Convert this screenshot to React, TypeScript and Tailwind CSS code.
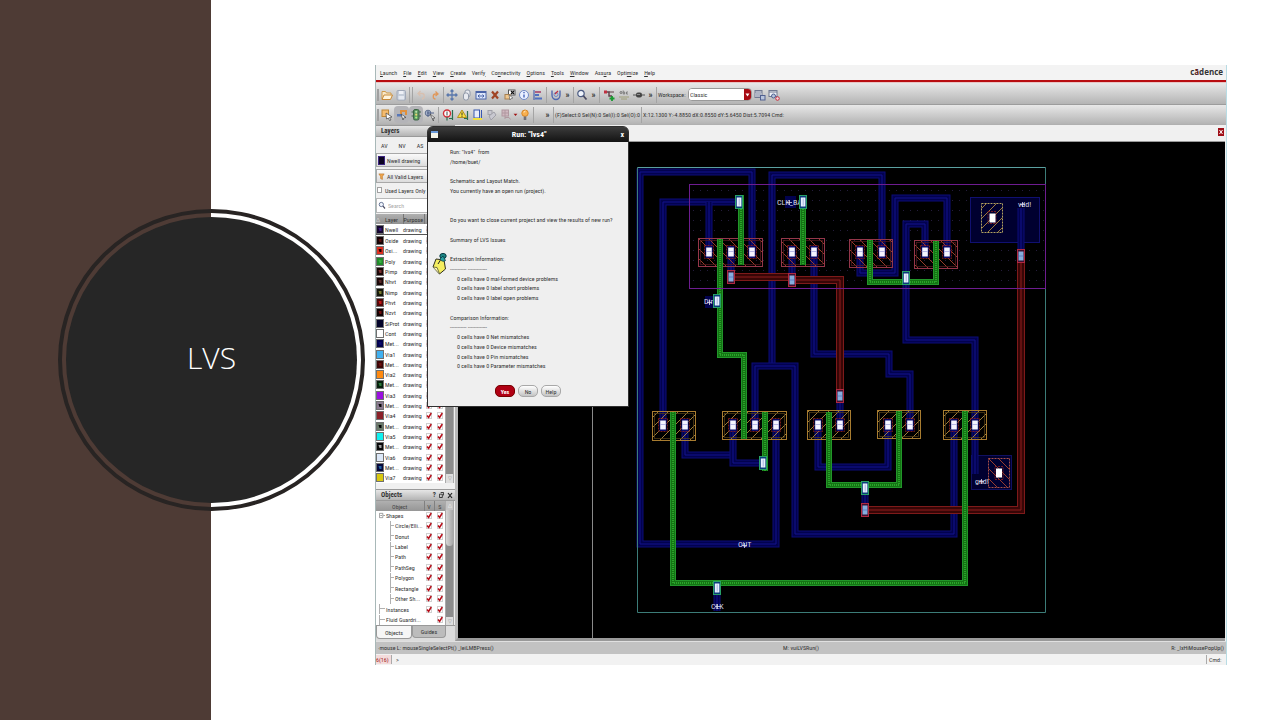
import type { ReactNode } from "react";

type Point = [number, number];

const menus: [string, string, string][] = [
  ["", "L", "aunch"],
  ["", "F", "ile"],
  ["", "E", "dit"],
  ["", "V", "iew"],
  ["", "C", "reate"],
  ["Verif", "y", ""],
  ["Co", "n", "nectivity"],
  ["", "O", "ptions"],
  ["", "T", "ools"],
  ["", "W", "indow"],
  ["Ass", "u", "ra"],
  ["Opti", "m", "ize"],
  ["", "H", "elp"],
];

const layers: { name: string; fill: string; mark: string }[] = [
  { name: "Nwell", fill: "#14082e", mark: "#3a1a80" },
  { name: "Oxide", fill: "#140404", mark: "#5a1010" },
  { name: "Oxi...", fill: "#e03020", mark: "#200404" },
  { name: "Poly", fill: "#1f8a2a", mark: "#38b040" },
  { name: "Pimp", fill: "#1a0606", mark: "#7a3030" },
  { name: "Nhvt", fill: "#1a0808", mark: "#5a2a2a" },
  { name: "Nimp", fill: "#14180a", mark: "#7a7a30" },
  { name: "Phvt", fill: "#500808", mark: "#c01818" },
  { name: "Nzvt", fill: "#120202", mark: "#701010" },
  { name: "SiProt", fill: "#04042a", mark: "#04042a" },
  { name: "Cont", fill: "#ffffff", mark: "#ffffff" },
  { name: "Met...", fill: "#02024c", mark: "#0a0a70" },
  { name: "Via1", fill: "#40b0f0", mark: "#40b0f0" },
  { name: "Met...", fill: "#3c0606", mark: "#6a1010" },
  { name: "Via2", fill: "#ff8a10", mark: "#ff8a10" },
  { name: "Met...", fill: "#06200c", mark: "#2a7a3a" },
  { name: "Via3", fill: "#9a10e0", mark: "#9a10e0" },
  { name: "Met...", fill: "#8a7a90", mark: "#080808" },
  { name: "Via4", fill: "#8a2028", mark: "#8a2028" },
  { name: "Met...", fill: "#6a7a6a", mark: "#040404" },
  { name: "Via5", fill: "#10f0f0", mark: "#10f0f0" },
  { name: "Met...", fill: "#080808", mark: "#a0a0a0" },
  { name: "Via6", fill: "#dce8f8", mark: "#dce8f8" },
  { name: "Met...", fill: "#04083c", mark: "#2060a0" },
  { name: "Via7", fill: "#d8c810", mark: "#d8c810" },
];

const objects: { name: string; level: number; v: boolean }[] = [
  { name: "Shapes", level: 0, v: true },
  { name: "Circle/Elli...", level: 1, v: true },
  { name: "Donut", level: 1, v: true },
  { name: "Label", level: 1, v: true },
  { name: "Path", level: 1, v: true },
  { name: "PathSeg", level: 1, v: true },
  { name: "Polygon", level: 1, v: true },
  { name: "Rectangle", level: 1, v: true },
  { name: "Other Sh...", level: 1, v: true },
  { name: "Instances", level: 0, v: true },
  { name: "Fluid Guardri...", level: 0, v: false },
];

const report: { text: string; indent?: boolean }[] = [
  { text: 'Run: "lvs4"  from' },
  { text: "/home/buet/" },
  { text: "" },
  { text: "Schematic and Layout Match." },
  { text: "You currently have an open run (project)." },
  { text: "" },
  { text: "" },
  { text: "Do you want to close current project and view the results of new run?" },
  { text: "" },
  { text: "Summary of LVS Issues" },
  { text: "" },
  { text: "Extraction Information:" },
  { text: "----------- -------------" },
  { text: "0 cells have 0 mal-formed device problems", indent: true },
  { text: "0 cells have 0 label short problems", indent: true },
  { text: "0 cells have 0 label open problems", indent: true },
  { text: "" },
  { text: "Comparison Information:" },
  { text: "----------- -------------" },
  { text: "0 cells have 0 Net mismatches", indent: true },
  { text: "0 cells have 0 Device mismatches", indent: true },
  { text: "0 cells have 0 Pin mismatches", indent: true },
  { text: "0 cells have 0 Parameter mismatches", indent: true },
];

const blueWires: Point[][] = [
  [[752, 256], [752, 172], [640, 172], [640, 544], [776, 544], [776, 425]],
  [[739, 202], [663, 202], [663, 425]],
  [[709, 202], [709, 252]],
  [[772, 366], [772, 175], [882, 175], [882, 252]],
  [[755, 425], [755, 366], [795, 366], [795, 534], [954, 534], [954, 425]],
  [[814, 252], [814, 354], [889, 354], [889, 374], [910, 374], [910, 425]],
  [[731, 252], [731, 278]],
  [[792, 252], [792, 280]],
  [[860, 252], [860, 273], [895, 273], [895, 198], [947, 198], [947, 252]],
  [[925, 252], [925, 224], [906, 224], [906, 340], [975, 340], [975, 474]],
  [[685, 425], [685, 455], [733, 455]],
  [[733, 425], [733, 463], [760, 463]],
  [[818, 425], [818, 467], [888, 467], [888, 425]],
  [[840, 396], [840, 425]],
  [[865, 488], [865, 510]],
  [[717, 584], [717, 611]],
  [[1021, 208], [1021, 256]],
];

const greenWires: Point[][] = [
  [[741, 195], [741, 265]],
  [[720, 239], [720, 355], [744, 355], [744, 439]],
  [[803, 195], [803, 265]],
  [[870, 240], [870, 282], [936, 282], [936, 241]],
  [[673, 412], [673, 583], [965, 583], [965, 411]],
  [[765, 412], [765, 471]],
  [[829, 412], [829, 485], [899, 485], [899, 411]],
];

const redWires: Point[][] = [
  [[731, 277], [793, 277]],
  [[792, 280], [840, 280], [840, 396]],
  [[1021, 256], [1021, 510], [865, 510]],
];

const pDevices: { box: [number, number, number, number]; contacts: number[] }[] = [
  { box: [698, 238, 64, 28], contacts: [709, 731, 752] },
  { box: [781, 238, 43, 28], contacts: [792, 814] },
  { box: [849, 239, 43, 28], contacts: [860, 882] },
  { box: [914, 240, 43, 28], contacts: [925, 947] },
];

const nDevices: { box: [number, number, number, number]; contacts: number[] }[] = [
  { box: [652, 411, 43, 29], contacts: [663, 685] },
  { box: [722, 411, 64, 28], contacts: [733, 755, 776] },
  { box: [807, 410, 43, 29], contacts: [818, 840] },
  { box: [877, 410, 43, 28], contacts: [888, 910] },
  { box: [943, 410, 43, 29], contacts: [954, 975] },
];

const polyVias: Point[] = [[739, 202], [803, 202], [717, 301], [906, 278], [763, 463], [865, 488], [717, 588]];
const metalVias: Point[] = [[731, 277], [792, 280], [1021, 256], [840, 396], [865, 510]];

const labels: { x: number; y: number; text: string; mark: Point }[] = [
  { x: 777, y: 205, text: "CLK_BA", mark: [789, 202] },
  { x: 704, y: 304, text: "Din", mark: [709, 302] },
  { x: 738, y: 547, text: "OUT", mark: [744, 545] },
  { x: 711, y: 609, text: "CLK", mark: [717, 606] },
  { x: 1018, y: 207, text: "vdd!", mark: [1022, 204] },
  { x: 975, y: 484, text: "gnd!", mark: [981, 481] },
];

const toPoints = (points: Point[]) => points.map((p) => p.join(",")).join(" ");

function Wire({ points, width, edge, body, core }: { points: Point[]; width: number; edge: string; body: string; core: string }) {
  const pts = toPoints(points);
  return (
    <g fill="none" strokeLinecap="butt" strokeLinejoin="miter">
      <polyline points={pts} stroke={edge} strokeWidth={width} />
      <polyline points={pts} stroke={body} strokeWidth={width - 2} />
      <polyline points={pts} stroke={core} strokeWidth={1} />
    </g>
  );
}

function Contact({ x, y }: { x: number; y: number }) {
  return (
    <g>
      <rect x={x - 4.5} y={y - 6.5} width="9" height="13" fill="none" stroke="#902020" strokeWidth="0.8" strokeDasharray="2 1" />
      <rect x={x - 3.5} y={y - 6} width="7" height="12" fill="#08086a" />
      <rect x={x - 2.8} y={y - 4.5} width="5.6" height="9" fill="#f4f4ff" />
      <rect x={x - 2.8} y={y - 0.8} width="5.6" height="0.8" fill="#a8a8e0" />
    </g>
  );
}

function Circuit() {
  return (
    <svg viewBox="458 142 767 496" className="block h-full w-full" role="img" aria-label="Circuit layout">
      <defs>
        <pattern id="hatchP" width="10" height="10" patternUnits="userSpaceOnUse">
          <path d="M0 0L10 10" stroke="#a8442c" strokeWidth="0.9" />
        </pattern>
        <pattern id="hatchN" width="10" height="10" patternUnits="userSpaceOnUse">
          <path d="M0 10L10 0" stroke="#b08a3c" strokeWidth="0.9" />
        </pattern>
        <pattern id="dots" width="7" height="10" patternUnits="userSpaceOnUse">
          <rect width="1" height="1" fill="#241c3c" />
        </pattern>
      </defs>
      <rect x="458" y="142" width="767" height="496" fill="#000" />
      <path d="M592.5 142V638" stroke="#8a8a8a" />
      <rect x="690" y="185" width="355" height="103" fill="url(#dots)" />
      <rect x="970.5" y="197.5" width="69" height="45" fill="#000030" stroke="#101070" />
      <rect x="971.5" y="455.5" width="40" height="34" fill="#000030" stroke="#101060" />
      {blueWires.map((p, i) => (
        <Wire key={i} points={p} width={7} edge="#0c0c78" body="#02024e" core="#12128c" />
      ))}
      {[...pDevices.map((d) => ({ ...d, p: true })), ...nDevices.map((d) => ({ ...d, p: false }))].map((d, i) => {
        const [x, y, w, h] = d.box;
        return (
          <g key={i}>
            <rect x={x + 0.5} y={y + 0.5} width={w} height={h} fill={d.p ? "url(#hatchP)" : "url(#hatchN)"} stroke={d.p ? "#94364a" : "#a87c30"} />
            <rect x={x + 2.5} y={y + 2.5} width={w - 4} height={h - 4} fill="none" stroke={d.p ? "#5a1a20" : "#5a4418"} strokeWidth="0.7" />
          </g>
        );
      })}
      {redWires.map((p, i) => (
        <Wire key={i} points={p} width={8} edge="#7e1a1a" body="#380606" core="#8c1c1c" />
      ))}
      {greenWires.map((p, i) => (
        <g key={i} fill="none">
          <polyline points={toPoints(p)} stroke="#22962a" strokeWidth="6" />
          <polyline points={toPoints(p)} stroke="#147414" strokeWidth="4" />
          <polyline points={toPoints(p)} stroke="#2aa42a" strokeWidth="2" strokeDasharray="1 1" />
        </g>
      ))}
      {pDevices.flatMap((d) => d.contacts.map((x) => <Contact key={x} x={x} y={252} />))}
      {nDevices.flatMap((d) => d.contacts.map((x) => <Contact key={x} x={x} y={425} />))}
      <path d="M637.5 167.5V612.5H1045.5V167.5" fill="none" stroke="#3c7c78" />
      <path d="M637.5 167.5H1045.5" stroke="#5aa0a0" />
      <rect x="689.5" y="184.5" width="356" height="104" fill="none" stroke="#6e1c90" />
      <rect x="981.5" y="203.5" width="21" height="29" fill="url(#hatchN)" stroke="#b0a060" strokeDasharray="2 1" />
      <rect x="988.5" y="458.5" width="21" height="29" fill="url(#hatchP)" stroke="#a85048" strokeDasharray="2 1" />
      <rect x="988" y="211.5" width="8" height="12" fill="none" stroke="#902020" strokeWidth="0.8" strokeDasharray="2 1" />
      <rect x="989.5" y="213.5" width="6" height="9" fill="#fff" />
      <rect x="995" y="466.5" width="8" height="13" fill="none" stroke="#902020" strokeWidth="0.8" strokeDasharray="2 1" />
      <rect x="996" y="468.5" width="6" height="9" fill="#fff" />
      {labels.map((l) => (
        <g key={l.text}>
          {(l.text === "Din" || l.text === "CLK_BA") && <rect x={l.mark[0] - 4} y={l.mark[1] - 6} width="11" height="12" fill="#02024e" />}
          <text x={l.x} y={l.y} fill="#d8d8e8" className="font-['Roboto_Condensed','Liberation_Sans',sans-serif] text-[8px]">
            {l.text}
          </text>
          <path d={`M${l.mark[0] - 2} ${l.mark[1] + 0.5}h5M${l.mark[0] + 0.5} ${l.mark[1] - 2}v5`} stroke="#d8d8e8" strokeWidth="0.8" />
        </g>
      ))}
      {polyVias.map(([x, y]) => (
        <g key={`${x}-${y}`}>
          <rect x={x - 3.5} y={y - 6.5} width="7" height="13" fill="#0a3c7a" stroke="#28a068" />
          <rect x={x - 2.2} y={y - 4.5} width="4.6" height="9" fill="#e8f0ff" />
          <path d={`M${x + 0.2} ${y - 3.5}v7`} stroke="#8a9ad0" strokeWidth="0.7" />
        </g>
      ))}
      {metalVias.map(([x, y]) => (
        <g key={`${x}-${y}`}>
          <rect x={x - 3.5} y={y - 6.5} width="7" height="13" fill="#401030" stroke="#b02840" />
          <rect x={x - 2.5} y={y - 4.5} width="5" height="9" fill="#86aede" />
          <path d={`M${x - 2.5} ${y}h5`} stroke="#5070c0" strokeWidth="0.7" />
        </g>
      ))}
    </svg>
  );
}

const icons: Record<string, ReactNode> = {
  open: (
    <g>
      <path d="M1 10V2.500h3.500l1 1.500H10v1.500" fill="#f8e8c8" stroke="#d09a48" />
      <path d="M1 10.500L3 6h8.500L9.500 10.500z" fill="#fff4dc" stroke="#c88a38" />
    </g>
  ),
  save: (
    <g>
      <rect x="2" y="1.500" width="8.500" height="9.500" rx="1" fill="#c4ccd8" stroke="#a0a8b8" />
      <rect x="4" y="2" width="4.500" height="3" fill="#eef0f6" />
      <rect x="3.500" y="7" width="5.500" height="3.500" fill="#e4e8f0" />
    </g>
  ),
  undo: <path d="M3 4.500h4c3 0 3 5 0 5.500M5.500 2L3 4.500l2.500 2.500" fill="none" stroke="#d8c0b0" strokeWidth="1.300" />,
  redo: <path d="M8 5H6.500c-3 0-3 5 0 5M6.500 2.500l2.500 2.500L6.500 7" fill="none" stroke="#e0985c" strokeWidth="1.300" />,
  move: <path d="M6 1v10M1 6h10M4.500 2.500L6 1l1.500 1.500M4.500 9.500L6 11l1.500-1.500M2.500 4.500L1 6l1.500 1.500M9.500 4.500L11 6l-1.500 1.500" fill="none" stroke="#5a78ac" strokeWidth="1.300" />,
  copy: (
    <g stroke="#9098a8" fill="#e8eaf0">
      <rect x="4" y="1" width="5" height="7" rx="2" />
      <rect x="2.500" y="4" width="5" height="7" rx="2" />
    </g>
  ),
  stretch: (
    <g>
      <rect x="1" y="2.500" width="10" height="7.500" fill="#dce6fa" stroke="#4a64a8" />
      <path d="M1 3.500h10M3 7h6M4.500 5.500L3 7l1.500 1.500M7.500 5.500L9 7 7.500 8.500" stroke="#4a64a8" fill="none" />
    </g>
  ),
  remove: <path d="M3 2.500l6 7M9 2.500l-6 7" stroke="#a04424" strokeWidth="2.200" />,
  pick: (
    <g>
      <rect x="4.500" y="1" width="6.500" height="5" fill="#fff" stroke="#555" />
      <path d="M7 2l3 3M10 2L7 5" stroke="#111" strokeWidth="1.200" />
      <rect x="1" y="5.500" width="5" height="4.500" fill="#f0c890" stroke="#a88050" />
      <path d="M5 6l4 3-2 .5L6 11z" fill="#fff" stroke="#555" strokeWidth="0.600" />
    </g>
  ),
  info: (
    <g>
      <circle cx="6" cy="6" r="4.500" fill="#eaf0ff" stroke="#7088c4" />
      <path d="M6 5.500v3M6 3v1.300" stroke="#4864b8" strokeWidth="1.400" />
    </g>
  ),
  align: (
    <g>
      <path d="M2 1v10" stroke="#3450a8" />
      <rect x="3" y="2" width="6" height="2" fill="#b06080" />
      <rect x="3" y="5" width="4" height="2" fill="#5070c0" />
      <rect x="3" y="8.500" width="7" height="2" fill="#5070c0" />
    </g>
  ),
  target: (
    <g fill="none">
      <path d="M2 1.500v4.500a4 4.500 0 008 0V1.500" stroke="#5068b0" strokeWidth="1.400" />
      <circle cx="6" cy="5.500" r="2" stroke="#7088c8" />
      <path d="M5 5l3-3" stroke="#c03040" strokeWidth="1.200" />
    </g>
  ),
  search: (
    <g>
      <circle cx="5" cy="4.500" r="3.200" fill="#f0f4fc" stroke="#4a5a80" strokeWidth="1.200" />
      <path d="M7.500 7l3 3.500" stroke="#4a4a60" strokeWidth="1.800" />
    </g>
  ),
  route: (
    <g fill="none">
      <path d="M1 3h5v4h3" stroke="#604048" strokeWidth="1.400" />
      <rect x="1" y="1.500" width="3" height="3" fill="#c03040" />
      <path d="M6 3h5" stroke="#604048" />
      <path d="M9 7v5M6.500 9.500h5" stroke="#189a30" strokeWidth="1.800" />
    </g>
  ),
  label: (
    <g fill="none" stroke="#707070">
      <circle cx="3" cy="3.500" r="1" />
      <path d="M5.200 1.500v3.500h1.500V3H5.200M10 3H8.500v2H10" strokeWidth="0.800" />
      <path d="M1 8h10M3 10h6" stroke="#a0a078" />
    </g>
  ),
  pin: (
    <g>
      <path d="M0 6h3M9 6h3" stroke="#555" />
      <rect x="3" y="3.500" width="6" height="5" rx="2" fill="#444" />
      <path d="M4 5.500h3" stroke="#909090" />
    </g>
  ),
  panel: (
    <g>
      <rect x="1" y="1.500" width="7" height="7" fill="#f0f2f8" stroke="#707890" />
      <path d="M1 3h7M2 5h5M2 7h5" stroke="#707890" />
      <rect x="6.500" y="6.500" width="4.500" height="4.500" fill="#b8c4dc" stroke="#506090" />
    </g>
  ),
  panelOff: (
    <g>
      <rect x="1" y="1.500" width="8" height="6" fill="#f0f2f8" stroke="#707890" />
      <path d="M1 3h8" stroke="#707890" />
      <circle cx="5.500" cy="7" r="2" fill="#b8c4dc" stroke="#506090" />
      <circle cx="9.500" cy="9.500" r="1.800" fill="#f4d4d8" stroke="#c83040" />
    </g>
  ),
  select: (
    <g>
      <rect x="1" y="1" width="6.500" height="6.500" fill="#f4bc70" stroke="#c08838" />
      <path d="M5 4l6 4-2.500.5L10 11l-1.500.5-1-2.500L5.500 10z" fill="#fff" stroke="#444" strokeWidth="0.700" />
    </g>
  ),
  partial: (
    <g>
      <path d="M1 6h4V2h5v4" fill="none" stroke="#e0903c" strokeWidth="2" />
      <rect x="1" y="5" width="5" height="2.500" fill="#5878b8" />
      <path d="M5 5l5 3.500-2.200.3L7 11z" fill="#fff" stroke="#444" strokeWidth="0.700" />
    </g>
  ),
  signal: (
    <g>
      <rect x="3.500" y="0.500" width="5.500" height="10.500" rx="1.500" fill="#5a9460" stroke="#3c6444" />
      <circle cx="6.200" cy="2.800" r="1.100" fill="#b8e0a8" />
      <circle cx="6.200" cy="5.700" r="1.100" fill="#e8d870" />
      <circle cx="6.200" cy="8.600" r="1.100" fill="#a8f080" />
      <path d="M1.500 3h2M9 3h2M1.500 7h2M9 7h2" stroke="#3c6444" />
    </g>
  ),
  net: (
    <g>
      <circle cx="4" cy="4" r="2.800" fill="#a8b4cc" stroke="#607090" />
      <path d="M3 4h7M4 2v6" stroke="#506088" />
      <path d="M6 5l5 4-2.200.3L9.500 12z" fill="#fff" stroke="#444" strokeWidth="0.700" />
    </g>
  ),
  stop: (
    <g>
      <circle cx="5" cy="4.500" r="3.500" fill="#fff" stroke="#d03038" strokeWidth="1.400" />
      <path d="M5 2.500v4" stroke="#444" />
      <path d="M5 8v3.500M7 9.500h4M10.500 1v10" stroke="#287050" strokeWidth="1.200" fill="none" />
    </g>
  ),
  warn: (
    <g>
      <path d="M5 1l4.500 7.500h-9z" fill="#f8e040" stroke="#b09020" />
      <path d="M5 3.500v3M5 7.200v.8" stroke="#333" />
      <path d="M7 9.500h4M10.500 2v9" stroke="#287050" strokeWidth="1.200" />
    </g>
  ),
  ruler: (
    <g>
      <rect x="2" y="1" width="5.500" height="8" fill="#e8ecf8" stroke="#3858b0" />
      <rect x="1" y="9" width="9" height="2" fill="#f0e040" />
      <path d="M9.500 1v8" stroke="#3858b0" />
    </g>
  ),
  cut: (
    <g stroke="#a0a0a8" fill="none">
      <rect x="2" y="1.500" width="4" height="4" fill="#c8c8d0" />
      <path d="M3 7l5-4 2 3-5 5z" fill="#c8c8d0" />
    </g>
  ),
  stamp: (
    <g stroke="#b098a0">
      <rect x="2" y="1" width="6.500" height="6" fill="#d0b8c0" />
      <path d="M2 4h6.500M5 1v9M5 8.500h4l1.500 2" fill="none" />
    </g>
  ),
  bulb: (
    <g>
      <circle cx="6" cy="4.200" r="3.200" fill="#f8b050" stroke="#d88828" />
      <path d="M5 3.500c0-1 1-1.500 1.500-1.500" stroke="#fff4d8" fill="none" />
      <rect x="4.700" y="7.500" width="2.600" height="3.500" fill="#707078" />
    </g>
  ),
  funnel: <path d="M1.500 1.500h9L7.500 6v5l-3-1.500V6z" fill="#f0a850" stroke="#b87020" />,
  down: <path d="M1.500 4h9L6 9.500z" fill="#a01010" />,
};

function Icon({ name, className = "h-3 w-3" }: { name: string; className?: string }) {
  return (
    <svg viewBox="0 0 12 12" className={className} aria-hidden="true">
      {icons[name]}
    </svg>
  );
}

function Tool({ name, pressed = false, wide = false }: { name: string; pressed?: boolean; wide?: boolean }) {
  return (
    <button
      type="button"
      aria-label={name}
      className={`flex h-[17px] shrink-0 items-center justify-center ${wide ? "w-[15px]" : "w-[14px]"} ${pressed ? "rounded-sm bg-[#b4b4b8]" : ""}`}
    >
      <Icon name={name} />
    </button>
  );
}

function Separator() {
  return <span className="mx-px h-4 w-px shrink-0 border-l border-[#a4a4a4]" />;
}

function Grip() {
  return <span className="mx-px h-3 w-0.5 shrink-0 border-x border-[#a0a0a0]" />;
}

function More() {
  return (
    <button type="button" aria-label="More tools" className="w-[9px] shrink-0 text-center text-[9px] leading-3 font-bold text-[#333]">
      »
    </button>
  );
}

function Tick({ label }: { label: string }) {
  return (
    <span className="mx-auto grid h-[7px] w-[6px]">
      <input type="checkbox" defaultChecked aria-label={label} className="col-start-1 row-start-1 m-0 h-[7px] w-[6px] appearance-none border border-[#d0d0d0] bg-white" />
      <svg viewBox="0 0 6 7" className="pointer-events-none col-start-1 row-start-1 h-[7px] w-[6px]" aria-hidden="true">
        <path d="M1 3.500L2.600 5.500 5.300 1" fill="none" stroke="#b8101c" strokeWidth="1.500" />
      </svg>
    </span>
  );
}

function PanelTitle({ title, children }: { title: string; children?: ReactNode }) {
  return (
    <div className="flex h-3 items-center justify-between border-y border-[#9a9a9a] bg-linear-to-b from-[#e6e6e6] to-[#b4b4b4] pl-[5px] font-bold text-[#333]">
      <h2 className="text-[7px]">{title}</h2>
      {children}
    </div>
  );
}

function LayersPanel() {
  return (
    <section className="flex flex-col">
      <PanelTitle title="Layers" />
      <div className="flex h-4 items-center gap-[11px] overflow-hidden pl-[5px]">
        <button type="button">AV</button>
        <button type="button">NV</button>
        <button type="button">AS</button>
      </div>
      <button type="button" className="flex h-[14px] items-center gap-0.5 border border-[#a8a8a8] bg-linear-to-b from-[#fafafa] to-[#dcdcdc] pl-px">
        <span className="h-[9px] w-[7px] border border-[#3c2480] bg-[#0c0420]" />
        Nwell drawing
      </button>
      <button type="button" className="mt-0.5 flex h-[14px] items-center gap-0.5 border border-[#a8a8a8] bg-linear-to-b from-[#fafafa] to-[#dcdcdc] pl-px">
        <Icon name="funnel" className="h-[9px] w-[7px]" />
        All Valid Layers
      </button>
      <label className="flex h-[14px] items-center gap-[3px] pl-px whitespace-nowrap">
        <input type="checkbox" className="m-0 h-[6px] w-[5px] shrink-0 appearance-none border border-[#a0a0a0] bg-white" />
        Used Layers Only
      </label>
      <label className="my-px flex h-[15px] items-center gap-0.5 border border-[#b8b8b8] bg-white pl-px">
        <Icon name="search" className="h-[9px] w-[8px]" />
        <input type="text" placeholder="Search" aria-label="Search layers" className="w-12 min-w-0 bg-transparent placeholder:text-[#a8a8a8]" />
      </label>
      <div className="flex">
        <table className="h-[269px] w-[69px] table-fixed border-collapse bg-white">
          <colgroup>
            <col className="w-[9px]" />
            <col className="w-[18px]" />
            <col className="w-[21px]" />
            <col className="w-[10px]" />
            <col className="w-[11px]" />
          </colgroup>
          <thead>
            <tr className="h-[10px] bg-linear-to-b from-[#b0b0b0] to-[#929292] text-left text-[#333]">
              <th className="p-0 text-[5px] leading-[9px] font-normal text-white">△</th>
              <th className="p-0 font-normal">Layer</th>
              <th className="border-l border-[#777] p-0 font-normal">Purpose</th>
              <th className="border-l border-[#777] p-0" aria-label="Visible" />
              <th className="p-0" aria-label="Selectable" />
            </tr>
          </thead>
          <tbody>
            {layers.map((layer, i) => (
              <tr key={i} className={i === 0 ? "border-b border-[#555]" : ""}>
                <td className="p-0">
                  <svg viewBox="0 0 8 9" className="h-[9px] w-2" aria-hidden="true">
                    <rect x="0.500" y="0.500" width="7" height="8" fill={layer.fill} stroke="#707070" />
                    <path d="M2.500 3l3 0v3h-2z" fill={layer.mark} />
                  </svg>
                </td>
                <td className="p-0 whitespace-nowrap">{layer.name}</td>
                <td className="p-0 whitespace-nowrap">drawing</td>
                <td className="p-0">
                  <Tick label={`${layer.name} ${i} visible`} />
                </td>
                <td className="p-0">
                  <Tick label={`${layer.name} ${i} selectable`} />
                </td>
              </tr>
            ))}
          </tbody>
        </table>
        <div className="flex w-[9px] flex-col border-x border-[#aaa] bg-[#8c8c8c]">
          <span className="mt-auto h-[9px] bg-[#dedede] text-center text-[5px] leading-[9px] text-[#888]">▽</span>
        </div>
      </div>
    </section>
  );
}

function ObjectsPanel() {
  return (
    <section className="mt-[6px] flex flex-col">
      <PanelTitle title="Objects">
        <span className="flex items-center gap-[3px] pr-0.5">
          <button type="button" className="text-[7px]">?</button>
          <button type="button" aria-label="Float">
            <svg viewBox="0 0 6 7" className="h-[6px] w-[5px]" aria-hidden="true">
              <path d="M2 0.500h3.500v3.500M0.500 2.500h3.500v4h-3.500z" fill="none" stroke="#222" />
            </svg>
          </button>
          <button type="button" aria-label="Close objects">
            <svg viewBox="0 0 6 7" className="h-[7px] w-[6px]" aria-hidden="true">
              <path d="M1 1l4 5M5 1L1 6" stroke="#222" strokeWidth="1.200" />
            </svg>
          </button>
        </span>
      </PanelTitle>
      <div className="flex">
        <table className="h-[124px] w-[69px] table-fixed border-collapse bg-white">
          <colgroup>
            <col className="w-[48px]" />
            <col className="w-[10px]" />
            <col className="w-[11px]" />
          </colgroup>
          <thead>
            <tr className="h-[10px] bg-linear-to-b from-[#b0b0b0] to-[#969696] text-[#444]">
              <th className="p-0 font-normal">Object</th>
              <th className="border-l border-[#808080] p-0 font-normal">V</th>
              <th className="border-l border-[#808080] p-0 font-normal">S</th>
            </tr>
          </thead>
          <tbody>
            {objects.map((o) => (
              <tr key={o.name}>
                <td className="p-0 whitespace-nowrap">
                  <span className={`flex items-center gap-px ${o.level ? "pl-[14px]" : "pl-[3px]"}`}>
                    {o.name === "Shapes" ? (
                      <svg viewBox="0 0 7 7" className="h-[7px] w-[6px]" aria-hidden="true">
                        <path d="M0.500 1h4v5h-4zM1.500 3.500h2M5 3.500h2" fill="none" stroke="#777" strokeWidth="0.800" />
                      </svg>
                    ) : (
                      <span className={`h-[10px] border-l border-[#b0b0b0] ${o.level ? "w-1" : "w-[6px]"}`}>
                        <span className="block h-[5px] border-b border-[#b0b0b0]" />
                      </span>
                    )}
                    {o.name}
                  </span>
                </td>
                <td className="p-0">{o.v && <Tick label={`${o.name} visible`} />}</td>
                <td className="p-0">
                  <Tick label={`${o.name} selectable`} />
                </td>
              </tr>
            ))}
          </tbody>
        </table>
        <div className="flex w-[9px] flex-col border-x border-[#aaa] bg-[#8c8c8c]">
          <span className="h-[9px] bg-[#c4c4c4] text-center text-[5px] leading-[9px] text-white">△</span>
          <span className="h-9 rounded-b-sm bg-linear-to-r from-[#d8d8d8] to-[#a8a8a8]" />
          <span className="mt-auto h-[8px] bg-[#dedede] text-center text-[5px] leading-[8px] text-[#888]">▽</span>
        </div>
      </div>
      <div className="flex h-4 items-start border-t border-[#999] bg-[#dcdcdc]">
        <button type="button" className="h-[13px] w-9 rounded-b-sm border border-t-0 border-[#999] bg-[#f6f6f6]">
          Objects
        </button>
        <button type="button" className="h-3 w-[34px] rounded-b-sm border border-t-0 border-[#999] bg-[#bcbcbc]">
          Guides
        </button>
      </div>
    </section>
  );
}

function RunDialog() {
  return (
    <div role="dialog" aria-label="Run lvs4" className="absolute top-[61px] left-[51px] w-[202px] rounded-t-md border border-[#303030] bg-[#efefef]">
      <div className="flex h-[15px] items-center justify-between rounded-t bg-linear-to-b from-[#3c3c3c] to-[#141414] px-[3px] text-white">
        <svg viewBox="0 0 7 7" className="h-[7px] w-[7px]" aria-hidden="true">
          <rect width="7" height="7" fill="#f4f4e8" />
          <rect width="7" height="2" fill="#6a9ad8" />
        </svg>
        <h2 className="text-[8px] leading-3 font-bold">Run: "lvs4"</h2>
        <button type="button" aria-label="Close dialog" className="pr-px text-[8px] leading-3 font-bold">
          x
        </button>
      </div>
      <div className="flex gap-0.5 pt-[5px] pl-1">
        <svg viewBox="0 0 16 23" className="mt-[105px] h-[23px] w-4 shrink-0" aria-hidden="true">
          <path d="M4 7l8 1 1.500 9-6 5L1 15z" fill="#f4ee60" stroke="#303020" />
          <path d="M1 15l4 .5 2.500 6" fill="#fffcb0" stroke="#505030" strokeWidth="0.800" />
          <path d="M6 12l2.500-4" stroke="#222" />
          <ellipse cx="11" cy="4" rx="3.200" ry="2.600" fill="#1c8484" stroke="#0a3c44" />
          <path d="M8 7l3-3 2.500 4.500c-2 1.500-4.500.5-5.500-1.500z" fill="#28a0a0" stroke="#0a3c44" strokeWidth="0.800" />
        </svg>
        <div className="grid h-[224px] auto-rows-fr">
          {report.map((line, i) => (
            <p key={i} className={`min-h-0 leading-[9px] whitespace-pre ${line.indent ? "pl-[7px]" : ""}`}>
              {line.text}
            </p>
          ))}
        </div>
      </div>
      <div className="flex justify-center gap-[3px] pt-[14px] pb-[9px]">
        <button type="button" className="h-3 w-5 rounded-[5px] border border-[#700] bg-[#b00014] leading-[9px] font-bold text-white">
          Yes
        </button>
        <button type="button" className="h-3 w-5 rounded-[5px] border border-[#a8a8a8] bg-linear-to-b from-white to-[#c4c4c4] leading-[9px]">
          No
        </button>
        <button type="button" className="h-3 w-5 rounded-[5px] border border-[#a8a8a8] bg-linear-to-b from-white to-[#c4c4c4] leading-[9px]">
          Help
        </button>
      </div>
    </div>
  );
}

function LayoutWindow() {
  return (
    <div className="relative flex flex-1 flex-col border-x border-l-[#a8b8b8] border-r-[#b8dce4] bg-[#f0f0f0] font-['Roboto_Condensed','Open_Sans_Condensed','Liberation_Sans',sans-serif] text-[6px] leading-[9px] text-[#333]">
      <nav className="flex h-[15px] items-center gap-[6px] bg-[#f3f3f3] pr-[3px] pb-px pl-1">
        {menus.map(([before, key, after]) => (
          <button type="button" key={before + key + after}>
            {before}
            <span className="underline">{key}</span>
            {after}
          </button>
        ))}
        <span className="ml-auto font-['Open_Sans',sans-serif] text-[8px] leading-3 font-bold text-[#333]">c<span className="text-[#5a2020]">ā</span>dence</span>
      </nav>
      <div className="h-[3px] border-b border-[#e8c4c4] bg-[#b80c10]" />
      <div className="flex h-[22px] items-center border-b border-[#9c9c9c] bg-linear-to-b from-[#e8e8e8] to-[#b4b4b4] pt-0.5">
        <Grip />
        <Tool name="open" />
        <Tool name="save" />
        <Separator />
        <Separator />
        <Tool name="undo" />
        <Tool name="redo" />
        <Separator />
        <Tool name="move" />
        <Tool name="copy" wide />
        <Tool name="stretch" />
        <Tool name="remove" />
        <Tool name="pick" wide />
        <Tool name="info" />
        <Tool name="align" />
        <Separator />
        <Tool name="target" wide />
        <More />
        <Separator />
        <Tool name="search" />
        <More />
        <Separator />
        <Tool name="route" wide />
        <Tool name="label" wide />
        <Tool name="pin" wide />
        <More />
        <Separator />
        <label htmlFor="workspace" className="w-[29px] shrink-0 whitespace-nowrap">Workspace:</label>
        <span className="ml-px flex h-[13px] w-16 shrink-0 overflow-hidden rounded-sm border border-[#999] bg-white">
          <select id="workspace" className="min-w-0 flex-1 appearance-none bg-white pl-px">
            <option>Classic</option>
          </select>
          <span className="flex w-[7px] items-center justify-center bg-[#a80c14]">
            <svg viewBox="0 0 5 4" className="h-1 w-[5px]" aria-hidden="true">
              <path d="M0.500 0.500h4L2.500 3.500z" fill="#fff" />
            </svg>
          </span>
        </span>
        <Tool name="panel" wide />
        <Tool name="panelOff" />
      </div>
      <div className="flex h-5 items-center border-b border-[#b0b0b0] bg-linear-to-b from-[#e8e8e8] to-[#b4b4b4]">
        <Grip />
        <Tool name="select" />
        <Tool name="partial" pressed wide />
        <Tool name="signal" pressed />
        <Tool name="net" />
        <Separator />
        <Tool name="stop" wide />
        <Tool name="warn" wide />
        <Tool name="ruler" wide />
        <Tool name="cut" />
        <Tool name="stamp" />
        <Icon name="down" className="h-[5px] w-[5px]" />
        <Tool name="bulb" />
        <Separator />
        <span className="w-2" />
        <More />
        <Separator />
        <span>(F)Select:0 Sel(N):0 Sel(I):0 Sel(O):0</span>
        <Separator />
        <span>X:12.1300 Y:-4.8850 dX:0.8550 dY:5.6450 Dist:5.7094 Cmd:</span>
      </div>
      <div className="flex flex-1">
        <aside className="flex w-[79px] shrink-0 flex-col overflow-hidden">
          <LayersPanel />
          <ObjectsPanel />
        </aside>
        <div className="flex min-w-0 flex-1 flex-col pr-px">
          <div className="flex h-4 items-center justify-end pr-px pb-[3px]">
            <button type="button" aria-label="Close view" className="flex h-2 w-[6px] items-center justify-center bg-[#a01018]">
              <svg viewBox="0 0 6 8" className="h-2 w-[6px]" aria-hidden="true">
                <path d="M1.500 2l3 4M4.500 2l-3 4" stroke="#fff" />
              </svg>
            </button>
          </div>
          <div className="min-h-0 flex-1 border-t border-b-3 border-l-3 border-t-[#999] border-b-[#999] border-l-[#b8b8b8]">
            <Circuit />
          </div>
        </div>
      </div>
      <footer>
        <div className="grid h-[13px] grid-cols-3 items-center border-t border-[#e0e0e0] bg-[#c2c2c2] px-0.5 pb-0.5">
          <span>·mouse L: mouseSingleSelectPt() _leiLMBPress()</span>
          <span className="text-center">M: vuiLVSRun()</span>
          <span className="text-right">R: _lxHiMousePopUp()</span>
        </div>
        <div className="flex h-[11px] items-center bg-[#f2f2f2]">
          <span className="w-4 border-r border-[#aaa] bg-[#f4dcdc] text-[#a02020]">6(16)</span>
          <span className="pl-1">&gt;</span>
          <span className="ml-auto w-5 border-l border-[#aaa] pl-0.5">Cmd:</span>
        </div>
      </footer>
      <RunDialog />
    </div>
  );
}

export default function App() {
  return (
    <div className="relative flex min-h-screen bg-white">
      <div className="w-[211px] shrink-0 bg-[#4e3b35]" />
      <div className="absolute top-1/2 left-[58px] flex h-[302px] w-[307px] -translate-y-1/2 rounded-[50%] border-4 border-[#282423] p-1">
        <div className="flex flex-1 items-center justify-center rounded-[50%] bg-[#262626] pb-1">
          <h1 className="font-['Open_Sans','Noto_Sans',sans-serif] text-[30px] leading-10 font-light text-white">LVS</h1>
        </div>
      </div>
      <main className="flex min-w-0 flex-1 flex-col pt-[65px] pr-[53px] pb-[55px] pl-[164px]">
        <LayoutWindow />
      </main>
    </div>
  );
}
